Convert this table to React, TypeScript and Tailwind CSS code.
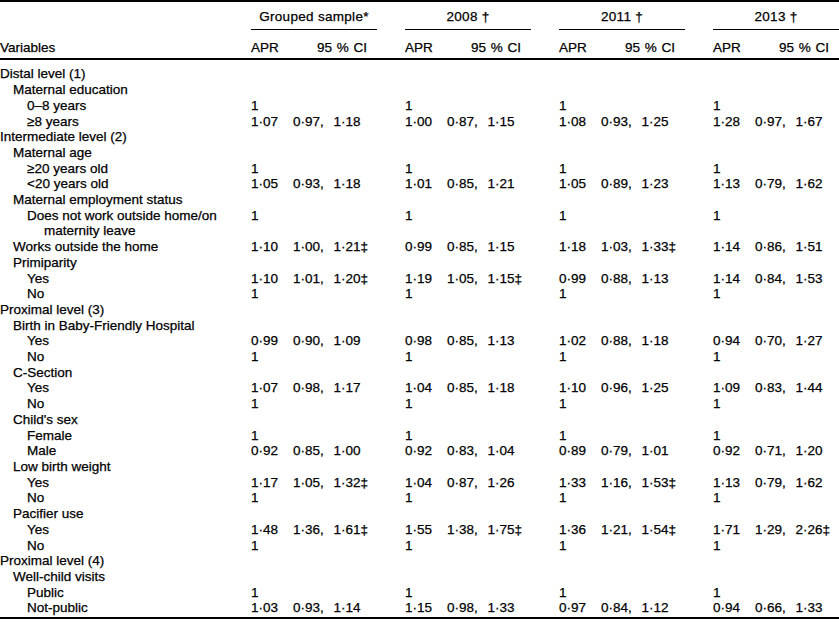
type Pair = [string, string];

interface Row {
  label: string;
  level: 0 | 1 | 2;
  cont?: string;
  vals?: Pair[];
}

const ones: Pair[] = [
  ['1', ''],
  ['1', ''],
  ['1', ''],
  ['1', ''],
];

const rows: Row[] = [
  { label: 'Distal level (1)', level: 0 },
  { label: 'Maternal education', level: 1 },
  { label: '0–8 years', level: 2, vals: ones },
  {
    label: '≥8 years',
    level: 2,
    vals: [
      ['1·07', '0·97, 1·18'],
      ['1·00', '0·87, 1·15'],
      ['1·08', '0·93, 1·25'],
      ['1·28', '0·97, 1·67'],
    ],
  },
  { label: 'Intermediate level (2)', level: 0 },
  { label: 'Maternal age', level: 1 },
  { label: '≥20 years old', level: 2, vals: ones },
  {
    label: '<20 years old',
    level: 2,
    vals: [
      ['1·05', '0·93, 1·18'],
      ['1·01', '0·85, 1·21'],
      ['1·05', '0·89, 1·23'],
      ['1·13', '0·79, 1·62'],
    ],
  },
  { label: 'Maternal employment status', level: 1 },
  { label: 'Does not work outside home/on', cont: 'maternity leave', level: 2, vals: ones },
  {
    label: 'Works outside the home',
    level: 1,
    vals: [
      ['1·10', '1·00, 1·21‡'],
      ['0·99', '0·85, 1·15'],
      ['1·18', '1·03, 1·33‡'],
      ['1·14', '0·86, 1·51'],
    ],
  },
  { label: 'Primiparity', level: 1 },
  {
    label: 'Yes',
    level: 2,
    vals: [
      ['1·10', '1·01, 1·20‡'],
      ['1·19', '1·05, 1·15‡'],
      ['0·99', '0·88, 1·13'],
      ['1·14', '0·84, 1·53'],
    ],
  },
  { label: 'No', level: 2, vals: ones },
  { label: 'Proximal level (3)', level: 0 },
  { label: 'Birth in Baby-Friendly Hospital', level: 1 },
  {
    label: 'Yes',
    level: 2,
    vals: [
      ['0·99', '0·90, 1·09'],
      ['0·98', '0·85, 1·13'],
      ['1·02', '0·88, 1·18'],
      ['0·94', '0·70, 1·27'],
    ],
  },
  { label: 'No', level: 2, vals: ones },
  { label: 'C-Section', level: 1 },
  {
    label: 'Yes',
    level: 2,
    vals: [
      ['1·07', '0·98, 1·17'],
      ['1·04', '0·85, 1·18'],
      ['1·10', '0·96, 1·25'],
      ['1·09', '0·83, 1·44'],
    ],
  },
  { label: 'No', level: 2, vals: ones },
  { label: "Child's sex", level: 1 },
  { label: 'Female', level: 2, vals: ones },
  {
    label: 'Male',
    level: 2,
    vals: [
      ['0·92', '0·85, 1·00'],
      ['0·92', '0·83, 1·04'],
      ['0·89', '0·79, 1·01'],
      ['0·92', '0·71, 1·20'],
    ],
  },
  { label: 'Low birth weight', level: 1 },
  {
    label: 'Yes',
    level: 2,
    vals: [
      ['1·17', '1·05, 1·32‡'],
      ['1·04', '0·87, 1·26'],
      ['1·33', '1·16, 1·53‡'],
      ['1·13', '0·79, 1·62'],
    ],
  },
  { label: 'No', level: 2, vals: ones },
  { label: 'Pacifier use', level: 1 },
  {
    label: 'Yes',
    level: 2,
    vals: [
      ['1·48', '1·36, 1·61‡'],
      ['1·55', '1·38, 1·75‡'],
      ['1·36', '1·21, 1·54‡'],
      ['1·71', '1·29, 2·26‡'],
    ],
  },
  { label: 'No', level: 2, vals: ones },
  { label: 'Proximal level (4)', level: 0 },
  { label: 'Well-child visits', level: 1 },
  { label: 'Public', level: 2, vals: ones },
  {
    label: 'Not-public',
    level: 2,
    vals: [
      ['1·03', '0·93, 1·14'],
      ['1·15', '0·98, 1·33'],
      ['0·97', '0·84, 1·12'],
      ['0·94', '0·66, 1·33'],
    ],
  },
];

const groups = ['Grouped sample*', '2008 †', '2011 †', '2013 †'];

const indent = ['pl-0', 'pl-[13px]', 'pl-[27px]'];

const App = () => {
  return (
    <div className="w-[839px] h-[623px] bg-white text-black font-['Liberation_Sans',Arial,sans-serif] text-[13.5px] leading-[15.7px] [-webkit-text-stroke:0.25px_black]">
      {/* header */}
      <div className="border-t-2 border-b-2 border-black">
        <div className="flex pt-[7px]">
          <div className="w-[251px]" />
          {groups.map((g, i) => (
            <div
              key={g}
              className={`w-[126px] text-center pb-[4px] border-b border-black tracking-[0.3px] ${i > 0 ? 'ml-[28px]' : ''}`}
            >
              {g}
            </div>
          ))}
        </div>
        <div className="flex pt-[10px] pb-[3px]">
          <div className="w-[251px]">Variables</div>
          {groups.map((g, i) => (
            <div key={g} className={`flex w-[126px] ${i > 0 ? 'ml-[28px]' : ''}`}>
              <div className="w-[42px]">APR</div>
              <div className="w-[84px] text-right pr-[10px] [word-spacing:1px]">95 % CI</div>
            </div>
          ))}
        </div>
      </div>

      {/* body */}
      <div className="pt-[6px] pb-[1px] border-b-2 border-black">
        {rows.map((r, idx) => (
          <div key={idx} className="flex">
            <div className={`w-[251px] ${indent[r.level]}`}>
              <div>{r.label}</div>
              {r.cont && <div className="pl-[17px]">{r.cont}</div>}
            </div>
            {groups.map((g, i) => (
              <div key={g} className={`flex w-[126px] ${i > 0 ? 'ml-[28px]' : ''}`}>
                <div className="w-[42px]">{r.vals ? r.vals[i][0] : ''}</div>
                <div className="w-[84px] whitespace-nowrap [word-spacing:6px]">
                  {r.vals ? r.vals[i][1] : ''}
                </div>
              </div>
            ))}
          </div>
        ))}
      </div>
    </div>
  );
};

export default App;
